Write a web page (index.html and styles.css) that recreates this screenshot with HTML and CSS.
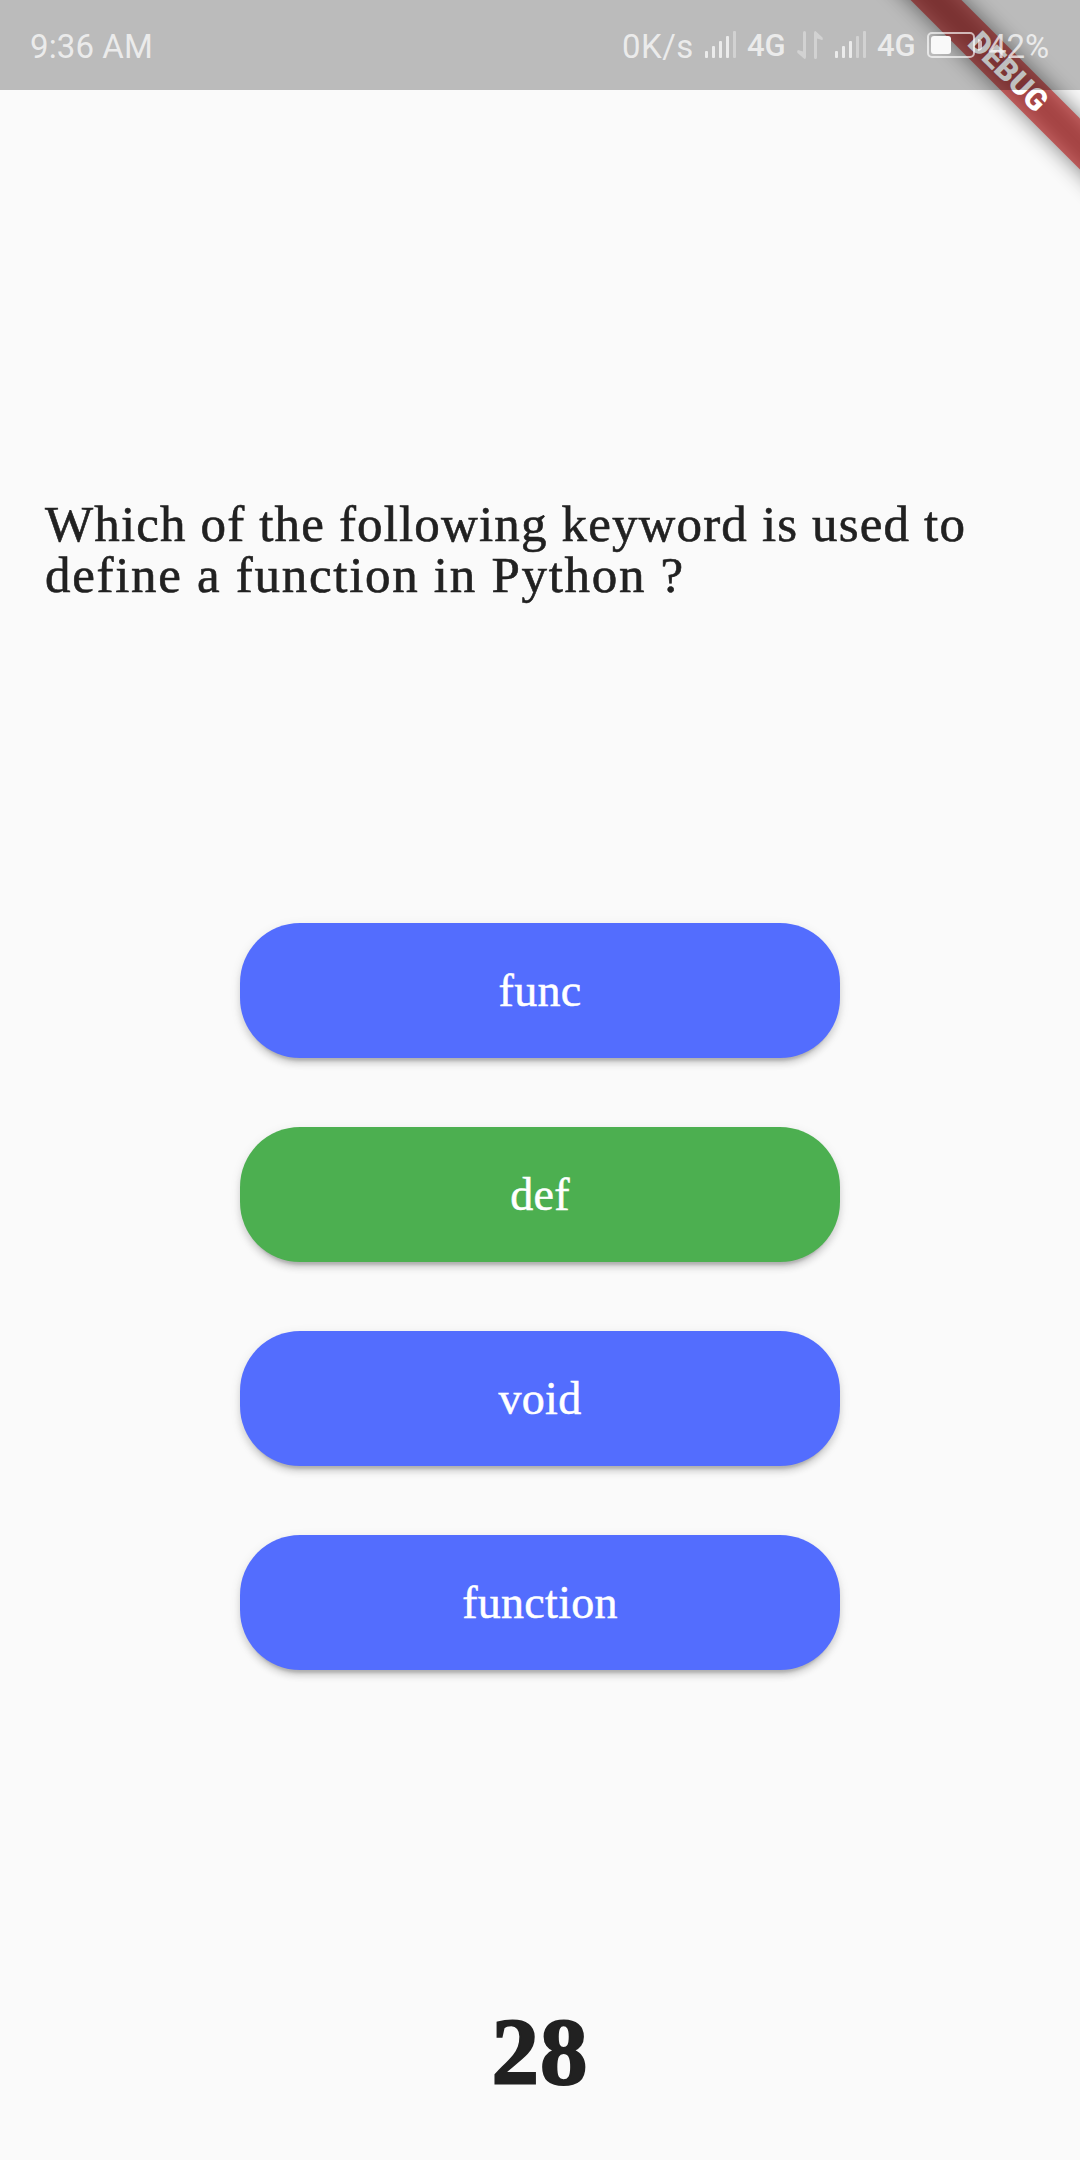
FILE: index.html
```html
<!DOCTYPE html>
<html lang="en">
<head>
<meta charset="utf-8">
<title>Quiz</title>
<link rel="stylesheet" href="styles.css">
</head>
<body>
<div class="banner-clip"><div class="banner"><span>DEBUG</span></div></div>
<header class="status">
  <span class="time">9:36 AM</span>
  <div class="indicators">
    <span class="speed">0K/s</span>
    <svg class="signal first" width="31" height="27" viewBox="0 0 31 27" fill="#ebebeb"><rect y="20" width="3" height="7" rx="1"/><rect x="7" y="15" width="3" height="12" rx="1"/><rect x="14" y="10" width="3" height="17" rx="1"/><rect x="21" y="5" width="3" height="22" rx="1"/><rect class="dim" x="28" width="3" height="27" rx="1"/></svg>
    <span class="network first">4G</span>
    <svg class="arrows" width="26" height="28" viewBox="0 0 26 28" fill="#d2d2d2"><path d="M6 1.5Q6 0 7.500 0T9 1.500V26Q9 28 7.500 28L.6 22Q-.4 20 1 19L6 20.500ZM17 2Q17 0 18.500 0L25.500 6.500Q26.400 9 25 9L20 7.500V26.500Q20 28 18.500 28T17 26.500Z"/></svg>
    <svg class="signal second" width="31" height="27" viewBox="0 0 31 27" fill="#ebebeb"><rect y="20" width="3" height="7" rx="1"/><rect x="7" y="15" width="3" height="12" rx="1"/><rect x="14" y="10" width="3" height="17" rx="1"/><rect class="dim" x="21" y="5" width="3" height="22" rx="1"/><rect class="dim" x="28" width="3" height="27" rx="1"/></svg>
    <span class="network second">4G</span>
    <svg class="battery" width="55" height="26" viewBox="0 0 55 26"><rect x="1" y="1" width="46" height="24" rx="4" fill="none" stroke="#fff" stroke-opacity=".65" stroke-width="2"/><rect x="4" y="4" width="20" height="18" rx="3" fill="#f9f9f9"/><path d="M51 7Q55 8 55 10V16Q55 18 51 19Z" fill="#fff" fill-opacity=".65"/></svg>
    <span class="percent">42%</span>
  </div>
</header>
<main class="quiz">
  <h1 class="question"><span class="line one">Which of the following keyword is used to</span><span class="line two">define a function in Python ?</span></h1>
  <div class="options">
    <button class="option">func</button>
    <button class="option correct">def</button>
    <button class="option">void</button>
    <button class="option">function</button>
  </div>
  <div class="timer">28</div>
</main>
</body>
</html>
```
FILE: styles.css
```css
* { box-sizing: border-box; }
body {
  margin: 0;
  width: 1080px;
  height: 2160px;
  overflow: hidden;
  position: relative;
  display: flex;
  flex-direction: column;
  background: #fafafa;
  color: #212121;
  font-family: "Liberation Serif", serif;
}
.banner-clip {
  position: absolute;
  top: 0;
  right: 0;
  width: 260px;
  height: 260px;
  overflow: hidden;
}
.banner {
  position: absolute;
  left: 8px;
  top: 54px;
  width: 360px;
  height: 36px;
  transform: rotate(45deg);
  display: flex;
  align-items: center;
  justify-content: center;
  color: #fff;
  font: 900 30.6px/36px Roboto, sans-serif;
}
.banner::before {
  content: "";
  position: absolute;
  inset: 0;
  background: rgba(0, 0, 0, .5);
  filter: blur(11px);
}
.banner::after {
  content: "";
  position: absolute;
  inset: 0;
  background: rgba(183, 28, 28, .627);
}
.banner span { position: relative; z-index: 1; }
.status {
  position: relative;
  height: 90px;
  flex: none;
  padding: 0 30px;
  display: flex;
  justify-content: space-between;
  background: rgba(0, 0, 0, .25);
  color: rgba(255, 255, 255, .72);
  font: 33px/39px Roboto, sans-serif;
  white-space: nowrap;
}
.time { margin-top: 27px; letter-spacing: .1px; }
.indicators { display: flex; width: 428px; align-items: flex-start; }
.indicators > * { flex: none; }
.speed { width: 83px; margin-top: 27px; letter-spacing: .5px; }
.signal { margin-top: 31px; }
.dim { fill: #d2d2d2; }
.network { margin-top: 26px; font-size: 31px; font-weight: 500; }
.network.first { width: 50px; margin-left: 11px; }
.network.second { width: 50px; margin-left: 11px; }
.arrows { margin-top: 31px; }
.signal.second { margin-left: 12px; }
.battery { margin-top: 32px; }
.percent { margin: 27px 0 0 6px; }
.quiz { display: flex; flex-direction: column; align-items: center; }
.question {
  width: 100%;
  margin: 409px 0 0;
  padding-left: 45px;
  font-size: 51px;
  line-height: 51px;
  font-weight: 400;
  -webkit-text-stroke: .6px #212121;
}
.line { display: block; white-space: nowrap; }
.one { letter-spacing: 1.15px; }
.two { letter-spacing: 1.7px; }
.options {
  margin-top: 321.5px;
  display: flex;
  flex-direction: column;
  gap: 69px;
}
.option {
  width: 600px;
  height: 135px;
  border: 0;
  border-radius: 60px;
  padding: 2px 0 0;
  background: #536dfe;
  color: #fff;
  font: 46px/52px "Liberation Serif", serif;
  letter-spacing: .3px;
  -webkit-text-stroke: .5px #fff;
  box-shadow: 0 9px 3px -6px rgba(0, 0, 0, .16), 0 6px 6px rgba(0, 0, 0, .11), 0 3px 12px rgba(0, 0, 0, .09);
}
.option.correct { background: #4caf50; }
.timer {
  margin-top: 327px;
  font-size: 95px;
  line-height: 110px;
  font-weight: 700;
  letter-spacing: 1px;
  -webkit-text-stroke: 2px #212121;
}
```
